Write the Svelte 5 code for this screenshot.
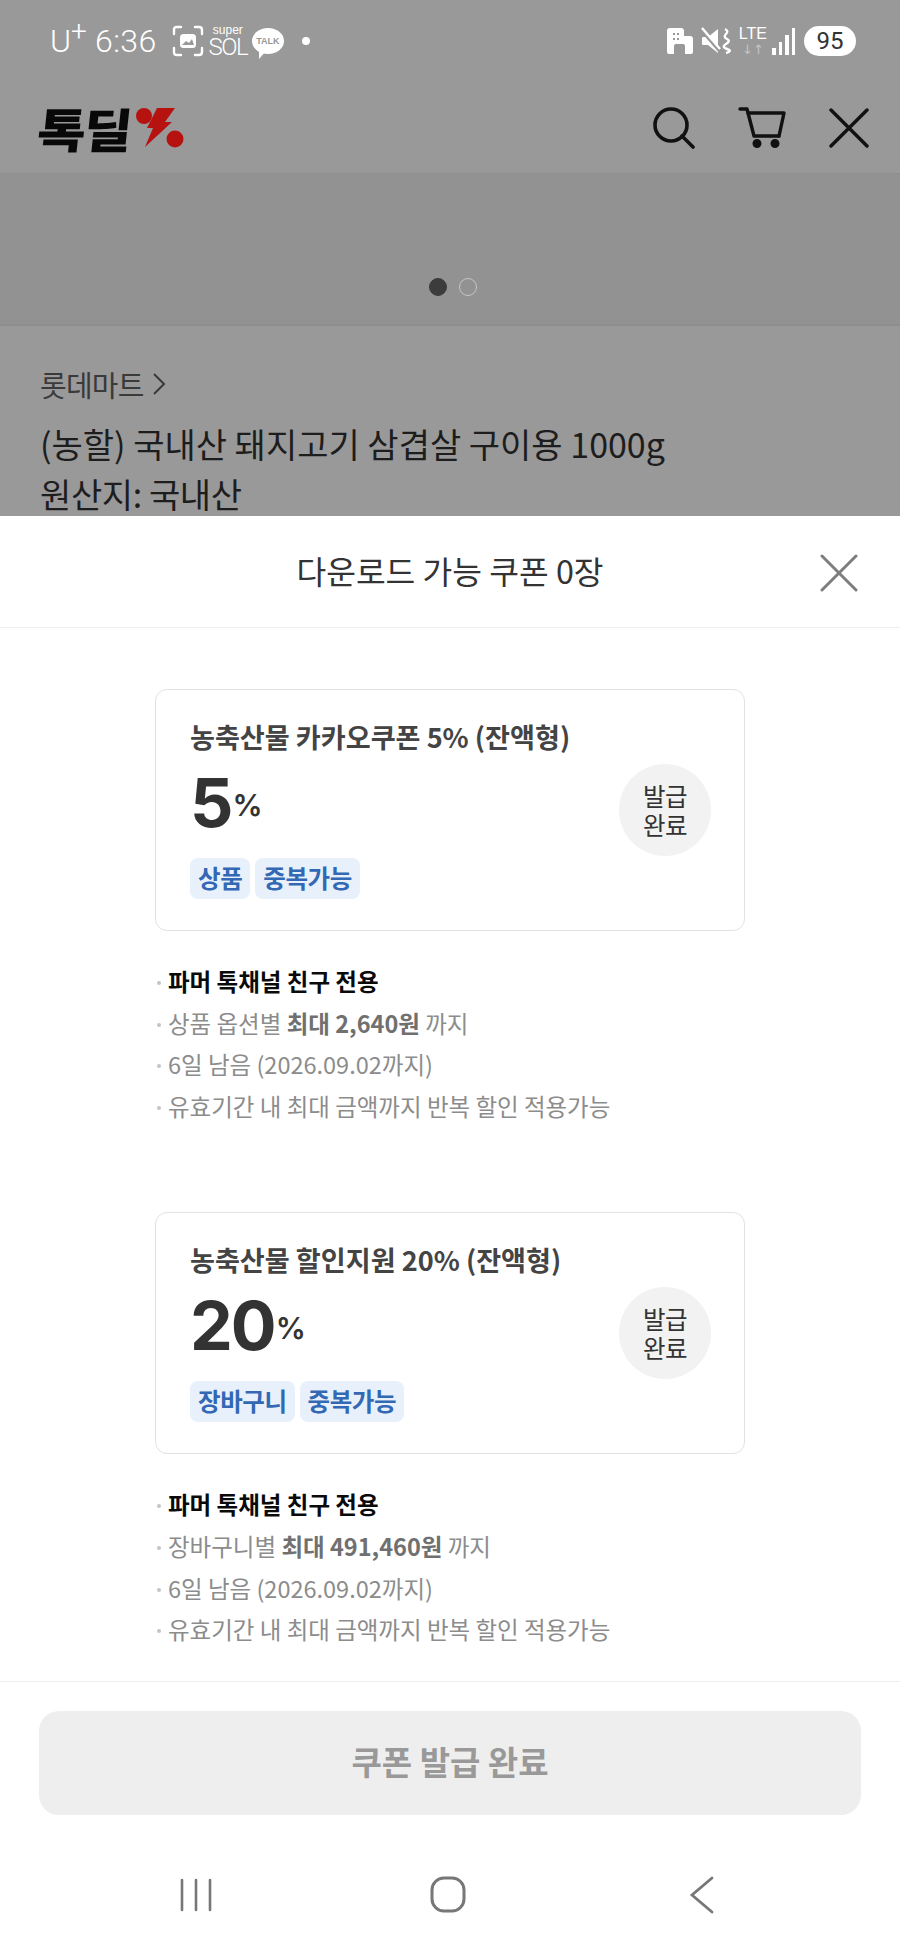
<script>
  const coupons = [
    { title: '농축산물 카카오쿠폰 5% (잔액형)', value: '5', chips: ['상품', '중복가능'], limitPre: '상품 옵션별 ', limit: '최대 2,640원', rule: '유효기간 내 최대 금액까지 반복 할인 적용가능' },
    { title: '농축산물 할인지원 20% (잔액형)', value: '20', chips: ['장바구니', '중복가능'], limitPre: '장바구니별 ', limit: '최대 491,460원', rule: '유효기간 내 최대 금액까지 반복 할인 적용가능' }
  ];
</script>

<div class="screen">
  <div class="dimmed">
    <div class="status">
      <div class="status-left">
        <span class="carrier">U<sup>+</sup></span>
        <span class="time">6:36</span>
        <svg class="ic-shot" width="32" height="32" viewBox="0 0 32 32" fill="none" stroke="#fff" stroke-width="2.4" stroke-linecap="round">
          <path d="M2 9V5q0-3 3-3h4M23 2h4q3 0 3 3v4M30 23v4q0 3-3 3h-4M9 30H5q-3 0-3-3v-4" />
          <rect x="8" y="9" width="16" height="14" rx="3.5" fill="#fff" stroke="none" />
          <path d="M10 20l4-4 3 2 3-4 2 6z" fill="#999" stroke="none" />
        </svg>
        <span class="sol"><span class="sol-top">super</span><span class="sol-main">SOL</span></span>
        <span class="talk"><span>TALK</span></span>
        <span class="dot"></span>
      </div>
      <div class="status-right">
        <svg width="26" height="28" viewBox="0 0 26 28" fill="#fff">
          <path d="M3 1h11q3 0 3 3v5h6q3 0 3 3v13q0 2-2 2h-6v-8q0-2-2-2H9q-2 0-2 2v8H2q-2 0-2-2V4q0-3 3-3z" />
          <g fill="#999"><rect x="6" y="6" width="2" height="2" /><rect x="10" y="6" width="2" height="2" /><rect x="6" y="11" width="2" height="2" /><rect x="10" y="11" width="2" height="2" /></g>
        </svg>
        <svg width="30" height="28" viewBox="0 0 30 28" fill="none">
          <path d="M2 10h5L17 2v24L7 18H2q-1 0-1-1v-6q0-1 1-1z" fill="#fff" />
          <path d="M1 3l18 21" stroke="#999" stroke-width="4" />
          <path d="M1 1l18 21" stroke="#fff" stroke-width="2.4" />
          <path d="M24 2q4 2 1 5t1 5-1 5 1 5-1 4" stroke="#fff" stroke-width="2.4" />
        </svg>
        <span class="lte"><span>LTE</span><span class="arrows">↓↑</span></span>
        <span class="bars"><i class="b1"></i><i class="b2"></i><i class="b3"></i><i class="b4"></i></span>
        <span class="battery">95</span>
      </div>
    </div>

    <div class="nav">
      <div class="logo">
        <span class="logo-text">톡딜</span>
        <svg width="50" height="42" viewBox="0 0 50 42" fill="#b51210">
          <circle cx="8" cy="9" r="8" />
          <circle cx="39" cy="32" r="8.5" />
          <path d="M21 1h18L29 15h7L9 40l8-19h-6z" />
        </svg>
      </div>
      <div class="nav-icons">
        <svg width="42" height="42" viewBox="0 0 42 42" fill="none" stroke="#111" stroke-width="3.6" stroke-linecap="round">
          <circle cx="18" cy="18" r="16" />
          <path d="M29 29l11 11" />
        </svg>
        <svg width="48" height="42" viewBox="0 0 48 42" fill="none" stroke="#111" stroke-width="3.4" stroke-linecap="round" stroke-linejoin="round">
          <path d="M2 2h7l7 27h25" />
          <path d="M10 6h36l-5 23" />
          <circle cx="19" cy="36.5" r="3.5" fill="#111" stroke-width="2" />
          <circle cx="37" cy="36.5" r="3.5" fill="#111" stroke-width="2" />
        </svg>
        <svg width="40" height="40" viewBox="0 0 40 40" stroke="#111" stroke-width="3.4" stroke-linecap="round">
          <path d="M2 2l36 36M38 2L2 38" />
        </svg>
      </div>
    </div>

    <div class="banner">
      <span class="pager on"></span>
      <span class="pager"></span>
    </div>

    <div class="product">
      <div class="seller">롯데마트 <svg width="14" height="24" viewBox="0 0 14 24" fill="none" stroke="#3a3a3a" stroke-width="2"><path d="M2 2l10 10L2 22" /></svg></div>
      <div class="name">(농할) 국내산 돼지고기 삼겹살 구이용 1000g</div>
      <div class="origin">원산지: 국내산</div>
    </div>
  </div>

  <div class="sheet">
    <div class="sheet-head">
      <span class="sheet-title">다운로드 가능 쿠폰 0장</span>
      <svg class="sheet-close" width="38" height="38" viewBox="0 0 38 38" stroke="#7d7d7d" stroke-width="3" stroke-linecap="round">
        <path d="M2 2l34 34M36 2L2 36" />
      </svg>
    </div>

    <div class="list">
      {#each coupons as c}
        <section class="coupon">
          <div class="card">
            <div class="card-main">
              <div class="card-title">{c.title}</div>
              <div class="discount"><span class="num">{c.value}</span><span class="pct">%</span></div>
              <div class="chips">
                {#each c.chips as chip}<span class="chip">{chip}</span>{/each}
              </div>
            </div>
            <div class="issued">발급<br />완료</div>
          </div>
          <ul class="notes">
            <li class="strong">파머 톡채널 친구 전용</li>
            <li>{c.limitPre}<b>{c.limit}</b> 까지</li>
            <li>6일 남음 (2026.09.02까지)</li>
            <li>{c.rule}</li>
          </ul>
        </section>
      {/each}
    </div>

    <div class="footer">
      <div class="cta">쿠폰 발급 완료</div>
    </div>

    <div class="softkeys">
      <svg width="32" height="34" viewBox="0 0 32 34" stroke="#777" stroke-width="2.6" stroke-linecap="round"><path d="M2 2v30M16 2v30M30 2v30" /></svg>
      <svg width="36" height="37" viewBox="0 0 36 37" fill="none" stroke="#777" stroke-width="3"><rect x="2" y="2" width="32" height="33" rx="12" /></svg>
      <svg width="26" height="38" viewBox="0 0 26 38" fill="none" stroke="#777" stroke-width="2.8" stroke-linecap="round"><path d="M23 2L3 19l20 17" /></svg>
    </div>
  </div>
</div>

<style>
  :global(body) {
    margin: 0;
    background: #fff;
  }
  .screen {
    width: 900px;
    height: 1950px;
    overflow: hidden;
    display: flex;
    flex-direction: column;
    font-family: "Noto Sans CJK KR", "Noto Sans", sans-serif;
    color: #222;
  }
  .dimmed {
    height: 516px;
    flex: none;
    background: #999;
  }
  .status {
    height: 82px;
    padding: 0 44px 0 50px;
    box-sizing: border-box;
    display: flex;
    justify-content: space-between;
    align-items: center;
    color: #fff;
    font-family: Roboto, sans-serif;
  }
  .status-left, .status-right {
    display: flex;
    align-items: center;
  }
  .carrier {
    font-size: 32px;
    font-weight: 300;
    line-height: 1;
    margin-right: 8px;
  }
  .carrier sup {
    font-size: 28px;
    line-height: 0;
    vertical-align: 11px;
  }
  .time {
    font-size: 32px;
    font-weight: 300;
    line-height: 1;
    letter-spacing: 0.5px;
    margin-right: 15px;
  }
  .ic-shot { margin-right: 6px; }
  .sol {
    display: flex;
    flex-direction: column;
    align-items: center;
    width: 36px;
    line-height: 1;
    margin-right: 6px;
  }
  .sol-top { font-size: 12px; font-family: "Liberation Sans", sans-serif; }
  .sol-main { font-size: 24px; font-weight: 300; letter-spacing: -1.5px; margin-top: -1px; }
  .talk {
    width: 32px;
    height: 26px;
    border-radius: 50%;
    background: #fff;
    display: flex;
    align-items: center;
    justify-content: center;
    position: relative;
    margin-right: 18px;
  }
  .talk::after {
    content: "";
    position: absolute;
    left: 7px;
    bottom: -5px;
    border-top: 8px solid #fff;
    border-right: 7px solid transparent;
  }
  .talk span {
    color: #999;
    font-size: 9px;
    font-family: "Liberation Sans", sans-serif;
    font-weight: 700;
  }
  .dot {
    width: 8px;
    height: 8px;
    background: #fff;
    border-radius: 50%;
  }
  .status-right { gap: 8px; }
  .lte {
    display: flex;
    flex-direction: column;
    align-items: center;
    font-size: 16px;
    font-weight: 500;
    line-height: 1;
    font-family: "Liberation Sans", sans-serif;
  }
  .arrows {
    color: #c4c4c4;
    font-size: 13px;
    margin-top: 1px;
    font-family: "DejaVu Sans", sans-serif;
  }
  .bars {
    display: flex;
    align-items: flex-end;
    gap: 3px;
    height: 28px;
    margin-left: -3px;
  }
  .bars i { width: 3.5px; background: #fff; display: block; }
  .b1 { height: 7px; }
  .b2 { height: 13px; }
  .b3 { height: 20px; }
  .b4 { height: 27px; }
  .battery {
    width: 52px;
    height: 30px;
    border-radius: 15px;
    background: #fff;
    color: #333;
    font-size: 24px;
    display: flex;
    align-items: center;
    justify-content: center;
    line-height: 1;
    margin-left: 1px;
  }
  .nav {
    height: 91px;
    padding: 0 31px 0 38px;
    display: flex;
    justify-content: space-between;
    align-items: center;
    border-bottom: 1px solid #8f8f8f;
    box-sizing: content-box;
  }
  .logo { display: flex; align-items: center; }
  .logo-text {
    font-size: 47px;
    font-weight: 900;
    color: #080808;
    line-height: 1;
    letter-spacing: -2px;
    transform: skewX(-6deg) scaleX(1.12);
    transform-origin: left center;
    margin-right: 16px;
  }
  .nav-icons {
    display: flex;
    align-items: center;
    gap: 43px;
  }
  .banner {
    height: 152px;
    background: #929292;
    border-bottom: 2px solid #8e8e8e;
    display: flex;
    align-items: flex-end;
    justify-content: center;
    gap: 12px;
    padding: 0 0 28px 5px;
    box-sizing: border-box;
  }
  .pager {
    width: 18px;
    height: 18px;
    border-radius: 50%;
    border: 1.5px solid #c6c6c6;
    box-sizing: border-box;
  }
  .pager.on {
    background: #3c3c3c;
    border-color: #3c3c3c;
  }
  .product {
    padding: 38px 40px 0;
    color: #1d1d1d;
  }
  .seller {
    display: flex;
    align-items: center;
    gap: 8px;
    font-size: 29px;
    color: #3a3a3a;
    line-height: 40px;
    letter-spacing: -0.8px;
    height: 40px;
  }
  .name {
    font-size: 34px;
    line-height: 44px;
    margin-top: 18px;
    white-space: nowrap;
  }
  .origin {
    font-size: 34px;
    line-height: 40px;
    margin-top: 8px;
    letter-spacing: -0.4px;
  }
  .sheet {
    flex: 1;
    min-height: 0;
    background: #fff;
    display: flex;
    flex-direction: column;
    position: relative;
  }
  .sheet-head {
    height: 112px;
    flex: none;
    border-bottom: 1.5px solid #eee;
    display: flex;
    align-items: center;
    justify-content: center;
    position: relative;
    padding-bottom: 4px;
    box-sizing: border-box;
  }
  .sheet-title {
    font-size: 32.3px;
    color: #333;
  }
  .sheet-close {
    position: absolute;
    right: 42px;
    top: 38px;
  }
  .list {
    height: 1053px;
    flex: none;
    overflow: hidden;
    padding: 61px 155px 0;
    box-sizing: border-box;
    display: flex;
    flex-direction: column;
    gap: 85px;
  }
  .card {
    height: 242px;
    border: 1.5px solid #e2e2e2;
    border-radius: 12px;
    box-sizing: border-box;
    padding: 27px 33px 0 34px;
    display: flex;
    justify-content: space-between;
    align-items: flex-start;
  }
  .card-title {
    font-size: 27.1px;
    font-weight: 700;
    line-height: 40px;
    color: #444;
    white-space: nowrap;
  }
  .discount {
    display: flex;
    align-items: center;
    height: 82px;
    color: #333;
    font-family: Inter, sans-serif;
    margin-top: 4px;
    line-height: 82px;
  }
  .num {
    font-size: 68px;
    font-weight: 700;
    letter-spacing: -2px;
  }
  .pct {
    font-size: 30px;
    font-weight: 600;
    margin-left: 1px;
    padding-top: 5px;
  }
  .chips {
    display: flex;
    gap: 5px;
    margin-top: 15px;
  }
  .chip {
    height: 41px;
    line-height: 40px;
    padding: 0 8px;
    font-size: 24.5px;
    font-weight: 700;
    color: #3268b4;
    background: #e8f0fb;
    border-radius: 8px;
    letter-spacing: -0.4px;
  }
  .issued {
    width: 92px;
    height: 92px;
    flex: none;
    border-radius: 50%;
    background: #f2f2f2;
    display: flex;
    align-items: center;
    justify-content: center;
    text-align: center;
    font-size: 24.5px;
    line-height: 29px;
    color: #333;
    margin-top: 47px;
    letter-spacing: -0.6px;
  }
  .notes {
    list-style: none;
    margin: 30px 0 0;
    padding: 0;
    font-size: 23.5px;
    line-height: 41.6px;
    color: #8c8c8c;
  }
  .notes li {
    padding-left: 13px;
    position: relative;
    white-space: nowrap;
  }
  .notes li::before {
    content: "";
    position: absolute;
    left: 2px;
    top: 20px;
    width: 4px;
    height: 4px;
    border-radius: 50%;
    background: #c4c4c4;
  }
  .notes b { color: #707070; font-weight: 700; }
  .notes .strong { color: #0a0a0a; font-weight: 700; }
  .footer {
    border-top: 1.5px solid #eee;
    padding: 29px 39px 0;
    flex: none;
  }
  .cta {
    height: 104px;
    border-radius: 20px;
    background: #eeeeee;
    color: #999;
    font-size: 33px;
    font-weight: 700;
    display: flex;
    align-items: center;
    justify-content: center;
    padding-bottom: 5px;
    box-sizing: border-box;
  }
  .softkeys {
    flex: 1;
    display: grid;
    grid-template-columns: 180px 250px 34px 225px 26px;
    align-items: center;
    padding-top: 24px;
  }
  .softkeys svg:nth-child(1) { grid-column: 1; justify-self: end; transform: translateX(32px); }
  .softkeys svg:nth-child(2) { grid-column: 3; }
  .softkeys svg:nth-child(3) { grid-column: 5; }
</style>
